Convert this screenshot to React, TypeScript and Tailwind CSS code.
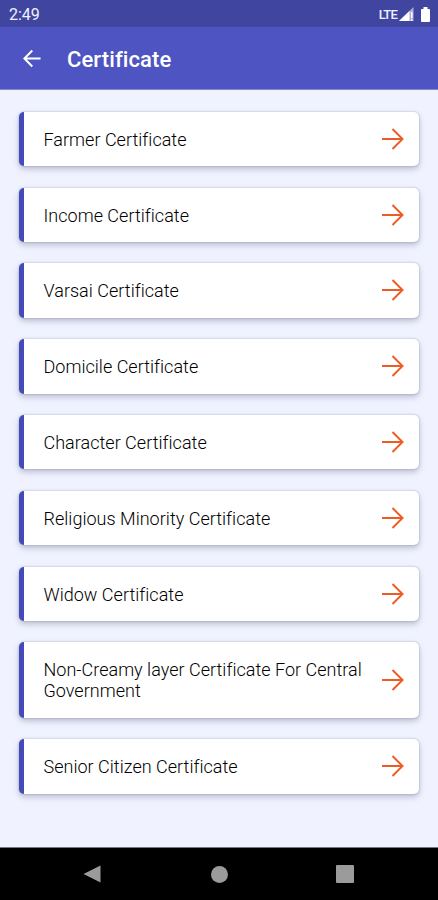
const certificates = [
	"Farmer Certificate",
	"Income Certificate",
	"Varsai Certificate",
	"Domicile Certificate",
	"Character Certificate",
	"Religious Minority Certificate",
	"Widow Certificate",
	"Non-Creamy layer Certificate For Central Government",
	"Senior Citizen Certificate",
];

function StatusBar() {
	return (
		<div className="flex h-[27px] items-center justify-between bg-[#4045a0] pl-[9px] pr-[8px] pt-[2px] text-[#f1f2ff]">
			<span className="pt-px text-[16px] leading-none">2:49</span>
			<div className="flex items-center">
				<span className="text-[13px] leading-none font-medium tracking-[-0.8px]">LTE</span>
				<svg className="ml-[2px] h-[15px] w-[16px]" viewBox="0 0 16 15">
					<path d="M0 14 14.5 0v14z" fill="#a9abd9" />
					<path d="M0 14 10.5 4v10zM12 5h1.5v6H12zM12 12.300h1.500V14H12z" fill="#fff" />
				</svg>
				<svg className="ml-[6px] h-[15px] w-[9px]" viewBox="0 0 9 16" preserveAspectRatio="none">
					<path d="M2.5 0h4v2H8q1 0 1 1v12q0 1-1 1H1q-1 0-1-1V3q0-1 1-1h1.5z" fill="#fff" />
				</svg>
			</div>
		</div>
	);
}

function Header() {
	return (
		<header className="flex h-[63px] items-center border-b border-[#8286cc] bg-[#4e54c1] pl-[22px] pt-[2px] text-white">
			<button aria-label="Back">
				<svg className="-mt-[2px] block h-[19px] w-[20px]" viewBox="0 0 20 20" fill="none" stroke="currentColor" strokeWidth="2.1">
					<path d="M19 10H2.5M10.3 1.6 2 10l8.3 8.4" />
				</svg>
			</button>
			<h1 className="ml-[25px] pt-px text-[22px] leading-none font-medium tracking-[0.1px]">Certificate</h1>
		</header>
	);
}

function CertificateCard({ title }: { title: string }) {
	return (
		<li className="flex min-h-[54.5px] items-center overflow-hidden rounded-[5px] border-l-[5px] border-[#444bb8] bg-white pt-[17px] pb-[16.5px] pl-[20px] pr-[15.5px] shadow-[0_3px_6px_rgba(45,45,85,0.28),0_0_2px_rgba(45,45,85,0.35)]">
			<span className="flex-1 text-[18px] leading-[21px] font-light tracking-[0.02px] text-black">{title}</span>
			<svg className="-mt-[2px] -mb-px ml-[2px] h-[22px] w-[23px] shrink-0" viewBox="0 0 23 22" fill="none" stroke="#ed5c24" strokeWidth="2">
				<path d="M1 11h20M11.5 1 21.5 11l-10 10" />
			</svg>
		</li>
	);
}

function NavigationBar() {
	return (
		<nav className="flex h-[53px] items-center border-t border-[#77777d] bg-black">
			<svg className="ml-[83px] h-[18px] w-[18px]" viewBox="0 0 18 18" fill="#9b9b9b">
				<path d="M17.5.5v17L.5 9z" />
			</svg>
			<div className="ml-[110px] h-[17px] w-[17px] rounded-full bg-[#9b9b9b]" />
			<div className="ml-[108px] h-[18px] w-[18px] rounded-[1px] bg-[#9b9b9b]" />
		</nav>
	);
}

export default function App() {
	return (
		<div className="flex h-[900px] w-[438px] flex-col overflow-hidden bg-[#f0f3ff] font-['Roboto',sans-serif]">
			<StatusBar />
			<Header />
			<main className="flex-1 pl-[18.5px] pr-[19px] pt-[21.75px]">
				<ul className="flex flex-col gap-[21.3px]">
					{certificates.map((title) => (
						<CertificateCard key={title} title={title} />
					))}
				</ul>
			</main>
			<NavigationBar />
		</div>
	);
}
